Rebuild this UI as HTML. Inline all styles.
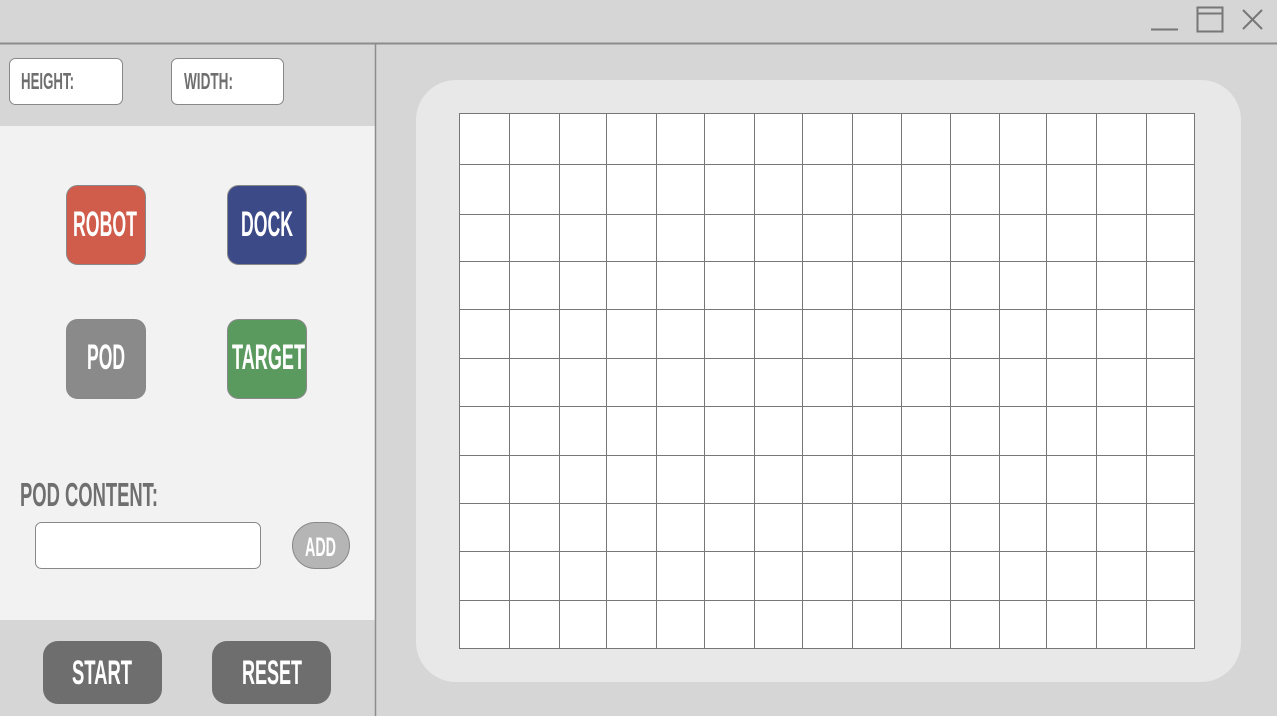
<!DOCTYPE html>
<html><head><meta charset="utf-8"><style>
html,body{margin:0;padding:0;width:1277px;height:716px;overflow:hidden;background:#d6d6d6}
svg{display:block}
text{font-family:"Liberation Sans Narrow","Liberation Sans",sans-serif;font-weight:bold}
</style></head><body>
<svg width="1277" height="716" viewBox="0 0 1277 716" xmlns="http://www.w3.org/2000/svg">
<rect x="0" y="0" width="1277" height="716" fill="#d6d6d6"/>
<line x1="0" y1="43.5" x2="1277" y2="43.5" stroke="#8c8c8c" stroke-width="2"/>
<line x1="1151" y1="29.5" x2="1178" y2="29.5" stroke="#777" stroke-width="2"/>
<rect x="1197.5" y="7.5" width="25" height="24" fill="none" stroke="#777" stroke-width="2"/>
<line x1="1197" y1="13.5" x2="1223" y2="13.5" stroke="#777" stroke-width="2"/>
<path d="M1243 10 L1262 29 M1262 10 L1243 29" stroke="#777" stroke-width="2"/>
<rect x="0" y="126" width="375" height="494" fill="#f2f2f2"/>
<line x1="375.5" y1="44" x2="375.5" y2="716" stroke="#8c8c8c" stroke-width="1.5"/>
<rect x="9.5" y="58.5" width="113" height="46" rx="6" fill="#fff" stroke="#888"/>
<text x="21" y="89" font-size="23" fill="#6f6f6f" textLength="53" lengthAdjust="spacingAndGlyphs">HEIGHT:</text>
<rect x="171.5" y="58.5" width="112" height="46" rx="6" fill="#fff" stroke="#888"/>
<text x="184" y="89" font-size="23" fill="#6f6f6f" textLength="49" lengthAdjust="spacingAndGlyphs">WIDTH:</text>

<rect x="66.5" y="185.5" width="79" height="79" rx="11" fill="#d05c4c" stroke="#888"/>
<text x="73" y="236" font-size="35" fill="#fff" textLength="64" lengthAdjust="spacingAndGlyphs">ROBOT</text>
<rect x="227.5" y="185.5" width="79" height="79" rx="11" fill="#3c4a87" stroke="#888"/>
<text x="241" y="236" font-size="35" fill="#fff" textLength="52" lengthAdjust="spacingAndGlyphs">DOCK</text>
<rect x="66.5" y="319.5" width="79" height="79" rx="11" fill="#8a8a8a" stroke="#888"/>
<text x="87" y="369" font-size="35" fill="#fff" textLength="38" lengthAdjust="spacingAndGlyphs">POD</text>
<rect x="227.5" y="319.5" width="79" height="79" rx="11" fill="#5a9a5e" stroke="#888"/>
<text x="232" y="369" font-size="35" fill="#fff" textLength="73" lengthAdjust="spacingAndGlyphs">TARGET</text>

<text x="20" y="506" font-size="33" fill="#6f6f6f" textLength="138" lengthAdjust="spacingAndGlyphs">POD CONTENT:</text>
<rect x="35.5" y="522.5" width="225" height="46" rx="6" fill="#fff" stroke="#888"/>
<rect x="292.5" y="522.5" width="57" height="46" rx="23" fill="#b5b5b5" stroke="#888"/>
<text x="305" y="556" font-size="27" fill="#fff" textLength="31" lengthAdjust="spacingAndGlyphs">ADD</text>

<rect x="43" y="641" width="119" height="63" rx="15" fill="#6e6e6e"/>
<text x="72" y="684" font-size="34" fill="#fff" textLength="60" lengthAdjust="spacingAndGlyphs">START</text>
<rect x="212" y="641" width="119" height="63" rx="15" fill="#6e6e6e"/>
<text x="242" y="684" font-size="34" fill="#fff" textLength="60" lengthAdjust="spacingAndGlyphs">RESET</text>

<rect x="416" y="80" width="825" height="602" rx="40" fill="#e8e8e8"/>
<rect x="459.5" y="113.5" width="735" height="535" fill="#fff" stroke="#777"/>
<g stroke="#777" stroke-width="1">
<line x1="509.5" y1="113" x2="509.5" y2="649"/>
<line x1="559.5" y1="113" x2="559.5" y2="649"/>
<line x1="606.5" y1="113" x2="606.5" y2="649"/>
<line x1="656.5" y1="113" x2="656.5" y2="649"/>
<line x1="704.5" y1="113" x2="704.5" y2="649"/>
<line x1="754.5" y1="113" x2="754.5" y2="649"/>
<line x1="802.5" y1="113" x2="802.5" y2="649"/>
<line x1="852.5" y1="113" x2="852.5" y2="649"/>
<line x1="901.5" y1="113" x2="901.5" y2="649"/>
<line x1="950.5" y1="113" x2="950.5" y2="649"/>
<line x1="999.5" y1="113" x2="999.5" y2="649"/>
<line x1="1046.5" y1="113" x2="1046.5" y2="649"/>
<line x1="1096.5" y1="113" x2="1096.5" y2="649"/>
<line x1="1146.5" y1="113" x2="1146.5" y2="649"/>
<line x1="459" y1="164.5" x2="1195" y2="164.5"/>
<line x1="459" y1="214.5" x2="1195" y2="214.5"/>
<line x1="459" y1="261.5" x2="1195" y2="261.5"/>
<line x1="459" y1="309.5" x2="1195" y2="309.5"/>
<line x1="459" y1="358.5" x2="1195" y2="358.5"/>
<line x1="459" y1="406.5" x2="1195" y2="406.5"/>
<line x1="459" y1="455.5" x2="1195" y2="455.5"/>
<line x1="459" y1="503.5" x2="1195" y2="503.5"/>
<line x1="459" y1="551.5" x2="1195" y2="551.5"/>
<line x1="459" y1="600.5" x2="1195" y2="600.5"/>
</g>
</svg>
</body></html>
